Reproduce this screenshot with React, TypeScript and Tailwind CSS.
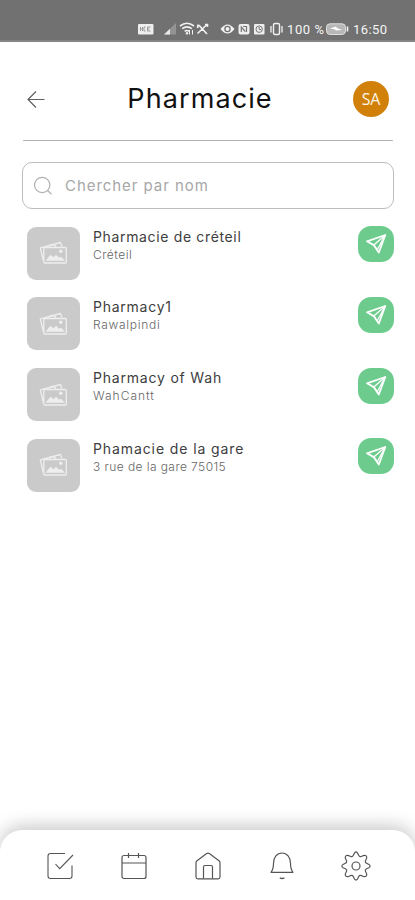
import React from "react";

const pharmacies = [
  { name: "Pharmacie de créteil", place: "Créteil", nameStyle: "tracking-[0.65px]", placeStyle: "tracking-[0.5px]" },
  { name: "Pharmacy1", place: "Rawalpindi", nameStyle: "tracking-[0.75px]", placeStyle: "tracking-[0.7px]" },
  { name: "Pharmacy of Wah", place: "WahCantt", nameStyle: "tracking-[0.8px]", placeStyle: "tracking-[1px]" },
  { name: "Phamacie de la gare", place: "3 rue de la gare 75015", nameStyle: "tracking-[0.9px]", placeStyle: "tracking-[0.42px]" },
];

function StatusBar() {
  return (
    <div className="h-[42px] shrink-0 border-b-2 border-[#858585] bg-[#717171]">
      <svg width="415" height="40" viewBox="0 0 415 40" fill="none" stroke="#f2f2f2" className="block">
        <rect x="138" y="24" width="15.5" height="10.5" rx="1" fill="#eeeeee" stroke="none" />
        <path d="M140.500 27v4m0-2h2m0-2v4m3-4h-1.500v4h1.500m2-4v4m0-4h3m-3 2h2m-2 2h3" stroke="#999999" strokeWidth="1" />
        <path d="M164 34.500 L176 23v11.500z" fill="#939393" stroke="none" />
        <path d="M164 34.500l6-5.800v5.800z" fill="#e8e8e8" stroke="none" />
        <path d="M180 26q7-5.500 14 0M182.200 28.700q4.800-3.600 9.600 0M184.600 31.300q2.400-1.700 4.600 0" strokeWidth="1.600" />
        <circle cx="187" cy="33.200" r="1.200" fill="#f2f2f2" stroke="none" />
        <path d="M189.500 30v4.500M192.500 34.500V30" strokeWidth="1" />
        <path d="M197.500 25q2 0 4 3l5.500 6M207 24.500l-9.500 9M198 25l-.5 3M205 24.500h2.500V27" strokeWidth="1.600" />
        <path d="M220.500 29q7-9 14 0q-7 9-14 0z" fill="#f2f2f2" stroke="none" />
        <circle cx="227.500" cy="29" r="2.600" fill="#f2f2f2" stroke="#717171" strokeWidth="1.300" />
        <rect x="238.500" y="24" width="11" height="10.500" rx="2" fill="#eeeeee" stroke="none" />
        <path d="M241.300 32v-5l4 4.500M243 26.500h3.500v5.500" stroke="#777777" strokeWidth="1.200" />
        <rect x="254" y="24" width="10.500" height="10.500" rx="1" fill="#eeeeee" stroke="none" />
        <circle cx="259.200" cy="29.200" r="3.200" stroke="#777777" />
        <path d="M259.200 27v2.500h2" stroke="#777777" />
        <rect x="273.500" y="23.500" width="6" height="11" rx="1.500" strokeWidth="1.400" />
        <path d="M271 26v6.500M282 26v6.500" strokeWidth="1.300" />
        <text x="287" y="33.600" fill="#f5f5f5" stroke="none" fontSize="13" fontFamily="Roboto, sans-serif" fontWeight="400" textLength="37">100 %</text>
        <rect x="326.500" y="23.800" width="19" height="10.700" rx="3.500" fill="#b7b7b7" stroke="#dddddd" />
        <path d="M347.500 26.500v5" strokeWidth="1.600" />
        <path d="M330 28.500l6-2 1 1.500 5 2-6 .5-1-1z" fill="#ffffff" stroke="none" />
        <text x="353" y="33.600" fill="#f5f5f5" stroke="none" fontSize="13" fontFamily="Roboto, sans-serif" fontWeight="400" textLength="34">16:50</text>
      </svg>
    </div>
  );
}

function PicturePlaceholder() {
  return (
    <div className="flex size-[53px] shrink-0 items-center justify-center rounded-[9px] bg-[#cacaca]">
      <svg width="32" height="26" viewBox="0 0 32 26" fill="none" stroke="#eeeeee" strokeWidth="1.300" strokeLinejoin="round">
        <path d="M5.300 20.500L2.300 7.800 22.500 2.500l1.500 4" />
        <path d="M11 6.500q3-4 7 0" />
        <rect x="5.800" y="7.500" width="22.500" height="15.500" rx="1" />
        <path d="M7.500 20.800l5-6 3 2.500 2.500-2.500 3 3 2-1 4 4z" fill="#eeeeee" stroke="none" />
        <circle cx="22.800" cy="11.200" r="1.700" fill="#eeeeee" stroke="none" />
      </svg>
    </div>
  );
}

function SendButton() {
  return (
    <button className="-mt-[0.5px] flex size-9 shrink-0 items-center justify-center rounded-[13px] bg-[#6dcc8d]" aria-label="Itinéraire">
      <svg width="24" height="24" viewBox="0 0 24 24" fill="none" stroke="#ffffff" strokeWidth="1.800" strokeLinejoin="round">
        <path d="M21.300 3L3 9.300l6.800 3.800 5 7.400z" />
        <path d="M21.300 3L9.800 13.100l3.300 4.900z" strokeWidth="1.300" />
      </svg>
    </button>
  );
}

function BottomNav() {
  return (
    <nav className="flex h-[70px] shrink-0 items-center justify-between rounded-t-[22px] bg-white pl-[44px] pr-[43px] pt-[2px] shadow-[0_-4px_18px_rgba(0,0,0,0.22)]">
      <svg width="32" height="32" viewBox="0 0 32 32" fill="none" stroke="#555555" strokeWidth="1.100">
        <path d="M21 3.500H6.500Q4 3.500 4 6v20q0 2.500 2.500 2.500h19q2.500 0 2.500-2.500V15.500M11.500 14l4.200 4.700L29 5" />
      </svg>
      <svg width="32" height="32" viewBox="0 0 32 32" fill="none" stroke="#555555" strokeWidth="1.200">
        <rect x="4" y="5.500" width="24" height="23" rx="2" />
        <path d="M4 13h24M10.500 3v5M20.500 3v5" />
      </svg>
      <svg width="32" height="32" viewBox="0 0 32 32" fill="none" stroke="#555555" strokeWidth="1.200" strokeLinejoin="round">
        <path d="M4 12.500Q4 11.500 5 10.700L14.700 3.600q1.300-.9 2.600 0L27 10.700q1 .8 1 1.800V27q0 1.800-1.800 1.800H5.800Q4 28.800 4 27z" />
        <path d="M11.500 28.500V17q0-1.500 1.500-1.500h6q1.500 0 1.500 1.500v11.500" />
      </svg>
      <svg width="32" height="32" viewBox="0 0 32 32" fill="none" stroke="#555555" strokeWidth="1.200" strokeLinejoin="round">
        <path d="M5 22.300q2.500-3 2.500-9C7.500 7 11 3 16 3s8.500 4 8.500 10.300q0 6 2.500 9z" />
        <path d="M13.800 27.800q2.300 1.400 4.600 0" strokeWidth="1.500" />
      </svg>
      <svg width="32" height="32" viewBox="0 0 32 32" fill="none" stroke="#555555" strokeWidth="1.200" strokeLinejoin="round">
        <path d="M14.600 2.800Q16 1 17.400 2.800C18.500 4.300 18.300 6 20 6.600C21.600 7.200 22.500 5.400 24.300 5.300Q26.800 5.200 26.700 7.700C26.600 9.500 24.800 10.400 25.400 12C26 13.700 27.700 13.500 29.200 14.600Q31 16 29.200 17.400C27.700 18.500 26 18.300 25.400 20C24.800 21.600 26.600 22.500 26.700 24.300Q26.800 26.800 24.300 26.700C22.500 26.600 21.600 24.800 20 25.400C18.300 26 18.500 27.700 17.400 29.200Q16 31 14.600 29.200C13.500 27.700 13.700 26 12 25.400C10.400 24.800 9.500 26.600 7.700 26.700Q5.200 26.800 5.300 24.300C5.400 22.500 7.200 21.600 6.600 20C6 18.300 4.300 18.500 2.800 17.400Q1 16 2.800 14.600C4.300 13.500 6 13.700 6.600 12C7.200 10.400 5.400 9.500 5.300 7.700Q5.200 5.200 7.700 5.300C9.500 5.400 10.400 7.200 12 6.600C13.700 6 13.500 4.300 14.600 2.800Z" />
        <circle cx="16" cy="16" r="4" />
      </svg>
    </nav>
  );
}

export default function App() {
  return (
    <div className="flex h-[900px] w-[415px] flex-col overflow-hidden bg-white font-['Inter',sans-serif]">
      <StatusBar />
      <header className="ml-[23px] mr-[22px] flex h-[99px] shrink-0 items-center justify-between border-b-[1.5px] border-[#b3b3b3] pr-[4px] pt-[16px]">
        <svg width="26" height="20" viewBox="0 0 26 20" fill="none" stroke="#606060" strokeWidth="1.200">
          <path d="M21.500 10.500H5M13 2.500L5 10.500l8 8" />
        </svg>
        <h1 className="-ml-[2px] whitespace-nowrap text-[27px] leading-9 tracking-[1.1px] text-[#111111]">Pharmacie</h1>
        <div className="flex size-9 items-center justify-center rounded-full bg-[#d18109] font-['Open_Sans',sans-serif] text-[16px] tracking-[-0.2px] text-[#fff5e6]">SA</div>
      </header>
      <div className="ml-[22px] mr-[21px] mt-[21px] flex h-[47px] shrink-0 items-center rounded-[10px] border border-[#bcbcbc] pl-[10px]">
        <svg width="20" height="20" viewBox="0 0 20 20" fill="none" stroke="#b0b0b0" strokeWidth="1.200">
          <circle cx="9.200" cy="9" r="7.700" />
          <path d="M14.500 14.500l4 3.700" />
        </svg>
        <span className="ml-[12px] whitespace-nowrap text-[15px] leading-5 tracking-[0.95px] text-[#a7a7a7]">Chercher par nom</span>
      </div>
      <main className="flex flex-1 flex-col gap-[17.8px] pl-[27px] pr-[21px] pt-[17.500px]">
        {pharmacies.map((item) => (
          <div key={item.name} className="flex h-[53px] shrink-0 items-start">
            <PicturePlaceholder />
            <div className="ml-[13px] flex flex-1 flex-col pt-[1px]">
              <span className={`whitespace-nowrap text-[14px] leading-[18px] text-[#3d3d3d] ${item.nameStyle}`}>{item.name}</span>
              <span className={`whitespace-nowrap text-[12px] font-light leading-[18px] text-[#666666] ${item.placeStyle}`}>{item.place}</span>
            </div>
            <SendButton />
          </div>
        ))}
      </main>
      <BottomNav />
    </div>
  );
}
